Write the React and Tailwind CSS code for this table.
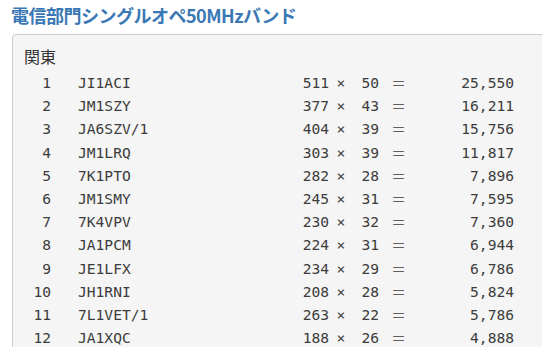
const rows = [
  [1, "JI1ACI", 511, 50, "25,550"],
  [2, "JM1SZY", 377, 43, "16,211"],
  [3, "JA6SZV/1", 404, 39, "15,756"],
  [4, "JM1LRQ", 303, 39, "11,817"],
  [5, "7K1PTO", 282, 28, "7,896"],
  [6, "JM1SMY", 245, 31, "7,595"],
  [7, "7K4VPV", 230, 32, "7,360"],
  [8, "JA1PCM", 224, 31, "6,944"],
  [9, "JE1LFX", 234, 29, "6,786"],
  [10, "JH1RNI", 208, 28, "5,824"],
  [11, "7L1VET/1", 263, 22, "5,786"],
  [12, "JA1XQC", 188, 26, "4,888"],
];

export default function App() {
  return (
    <div className="w-[542px] h-[347px] overflow-hidden bg-white font-['Noto_Sans_CJK_JP',sans-serif]">
      <h1 className="pl-[11px] pt-[2px] text-[18px] leading-[26px] font-bold text-[#3a78b5] tracking-[-0.5px]">
        電信部門シングルオペ50MHzバンド
      </h1>
      <div className="mt-[6px] ml-[12px] w-[560px] h-[400px] rounded-[4px] border border-[#cccccc] bg-[#f5f5f5] pl-[11px] pt-[9px]">
        <div className="text-[16px] leading-[24px] text-[#333]">関東</div>
        <div className="mt-[3px] font-['DejaVu_Sans_Mono',monospace] text-[14.6px] leading-[23.2px] text-[#3c3c3c]">
          {rows.map(([rank, call, a, b, total]) => (
            <div key={rank} className="flex">
              <span className="w-[27px] text-right">{rank}</span>
              <span className="ml-[27px] w-[224px]">{call}</span>
              <span className="w-[27px] text-right">{a}</span>
              <span className="w-[24px] text-center">×</span>
              <span className="w-[26px] text-right">{b}</span>
              <span className="w-[39px] text-center font-['Noto_Sans_CJK_JP',sans-serif] font-light">＝</span>
              <span className="w-[96px] text-right">{total}</span>
            </div>
          ))}
        </div>
      </div>
    </div>
  );
}
